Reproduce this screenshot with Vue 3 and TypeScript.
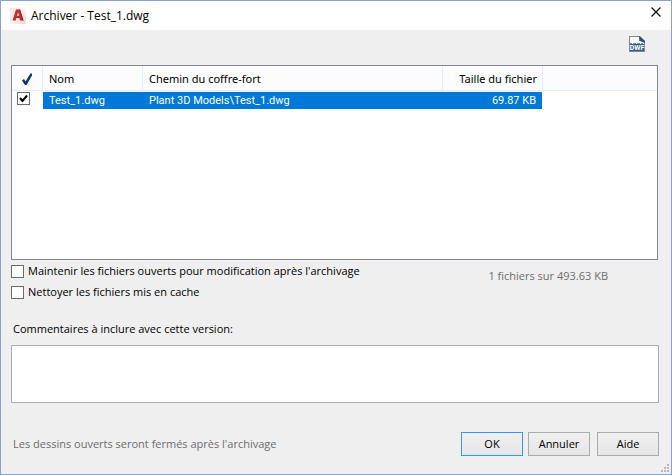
<script setup lang="ts">
import { ref } from 'vue'

interface VaultFile {
  name: string
  path: string
  size: string
  selected: boolean
}

const files = ref<VaultFile[]>([
  { name: 'Test_1.dwg', path: 'Plant 3D Models\\Test_1.dwg', size: '69.87 KB', selected: true },
])
const keepOpen = ref(false)
const clearCache = ref(false)
const comments = ref('')
</script>

<template>
  <main class="dialog">
    <header class="titlebar">
      <svg class="logo" viewBox="0 0 16 16" aria-hidden="true">
        <defs>
          <linearGradient id="logo-bg" x1="0" y1="0" x2="1" y2="1">
            <stop offset="0" stop-color="#f9e4e0" />
            <stop offset="0.5" stop-color="#fdf3f0" />
            <stop offset="1" stop-color="#f2d3cc" />
          </linearGradient>
        </defs>
        <rect width="16" height="16" fill="url(#logo-bg)" />
        <path d="M6 1.500h4l3.500 11h-3.500l-.6-2.500H6.400L5.700 12.500H2.500zM7 7.800h2L8 4.300z" fill="#c62b33" fill-rule="evenodd" />
        <path d="M9 1.500h1l3.500 11h-2z" fill="#a82630" />
      </svg>
      <h1>Archiver - Test_1.dwg</h1>
      <button class="close" type="button" aria-label="Fermer">
        <svg viewBox="0 0 10 10"><path d="M.5.5l9 9M9.500.5l-9 9" stroke="#111" stroke-width="1.3" fill="none" /></svg>
      </button>
    </header>

    <div class="toolbar">
      <button class="dwf" type="button">
        <svg viewBox="0 0 16 16">
          <path d="M0 0h11l5 5v11H0z" fill="#7d858d" />
          <path d="M1 1h9v4h5v3H1z" fill="#f7f8f9" />
          <path d="M10 0l6 5v2l-5-2z" fill="#2c4c7c" />
          <path d="M1 7.500h2M4 7.500h3M8 7.500h3M12 7.500h2" stroke="#7d858d" />
          <rect x="1" y="8" width="14" height="7" fill="#365c94" />
          <text x="8" y="14" text-anchor="middle" class="dwf-text">DWF</text>
        </svg>
      </button>
    </div>

    <section class="list">
      <table>
        <colgroup>
          <col class="c-check" /><col class="c-name" /><col class="c-path" /><col class="c-size" /><col />
        </colgroup>
        <thead>
          <tr>
            <th class="mark">
              <svg viewBox="0 0 12 13" aria-hidden="true">
                <path d="M1 7.500l2-1.500 1.500 2.500L9.500.5H11v2L5.500 12H4z" fill="#0c3563" />
              </svg>
            </th>
            <th>Nom</th>
            <th>Chemin du coffre-fort</th>
            <th class="num">Taille du fichier</th>
            <th class="rest"></th>
          </tr>
        </thead>
        <tbody>
          <tr v-for="file in files" :key="file.path">
            <td class="tick"><input v-model="file.selected" class="box" type="checkbox" :aria-label="file.name" /></td>
            <td class="sel">{{ file.name }}</td>
            <td class="sel">{{ file.path }}</td>
            <td class="sel num">{{ file.size }}</td>
            <td></td>
          </tr>
        </tbody>
      </table>
    </section>

    <section class="options">
      <div class="checks">
        <label><input v-model="keepOpen" class="box" type="checkbox" />Maintenir les fichiers ouverts pour modification après l'archivage</label>
        <label><input v-model="clearCache" class="box" type="checkbox" />Nettoyer les fichiers mis en cache</label>
      </div>
      <p class="summary">1 fichiers sur 493.63 KB</p>
    </section>

    <section class="comments">
      <label for="comments">Commentaires à inclure avec cette version:</label>
      <textarea id="comments" v-model="comments"></textarea>
    </section>

    <footer class="footer">
      <p>Les dessins ouverts seront fermés après l'archivage</p>
      <div class="buttons">
        <button class="btn primary" type="button">OK</button>
        <button class="btn" type="button">Annuler</button>
        <button class="btn help" type="button">Aide</button>
      </div>
    </footer>
    <svg class="grip" viewBox="0 0 8 8" aria-hidden="true">
      <path d="M6 0h2v2H6zM3 3h2v2H3zM6 3h2v2H6zM0 6h2v2H0zM3 6h2v2H3zM6 6h2v2H6z" fill="#bababa" />
    </svg>
  </main>
</template>

<style>
body {
  margin: 0;
}
</style>

<style scoped>
.dialog {
  position: relative;
  box-sizing: border-box;
  display: flex;
  flex-direction: column;
  min-height: 100vh;
  border: 1px solid #86a2ce;
  background: #efefef;
  color: #000;
  font-family: "Open Sans", "Noto Sans", sans-serif;
  font-size: 11px;
  line-height: 16px;
}

svg {
  display: block;
}

p,
h1 {
  margin: 0;
}

button {
  font: inherit;
  color: inherit;
  padding: 0;
}

.titlebar {
  display: flex;
  align-items: center;
  gap: 5px;
  height: 29px;
  padding: 0 10px 0 9px;
  background: #fff;
}

.logo {
  width: 16px;
  height: 16px;
}

h1 {
  flex: 1;
  font-size: 12px;
  font-weight: 400;
}

.close {
  padding-bottom: 8px;
  border: 0;
  background: none;
}

.close svg {
  width: 10px;
  height: 10px;
}

.toolbar {
  display: flex;
  justify-content: flex-end;
  height: 29px;
  padding: 6px 26px 0 0;
}

.dwf {
  width: 16px;
  height: 16px;
  border: 0;
  background: none;
}

.dwf-text {
  fill: #fff;
  font-family: Roboto, sans-serif;
  font-size: 7px;
  font-weight: 700;
}

.list {
  box-sizing: border-box;
  flex: 1;
  min-height: 195px;
  margin: 0 13px 0 10px;
  border: 1px solid #828790;
  background: #fff;
}

table {
  width: 100%;
  table-layout: fixed;
  border-collapse: separate;
  border-spacing: 0;
}

.c-check {
  width: 31px;
}

.c-name,
.c-size {
  width: 100px;
}

.c-path {
  width: 300px;
}

th {
  box-sizing: border-box;
  height: 25px;
  padding: 2px 5px 0 6px;
  border-right: 1px solid #e0eefb;
  border-bottom: 1px solid #e0eefb;
  background: #fcfcfc;
  font-family: "Noto Sans", "Open Sans", sans-serif;
  font-weight: 400;
  line-height: 16px;
  text-align: left;
  white-space: nowrap;
}

th.mark {
  padding: 2px 0 0 9px;
}

.mark svg {
  width: 12px;
  height: 13px;
}

th.rest {
  border-right: 0;
}

td {
  padding: 1px 6px 0;
  border-top: 1px solid #fff;
  font-family: Roboto, "Liberation Sans", sans-serif;
  line-height: 16px;
  white-space: nowrap;
}

td.sel {
  background: #0078d7;
  color: #fff;
}

th.num,
td.num {
  text-align: right;
}

td.num {
  border-right: 1px solid #fff;
}

td.tick {
  padding: 0 0 0 5px;
  vertical-align: top;
}

.box {
  appearance: none;
  display: block;
  flex: none;
  box-sizing: border-box;
  width: 13px;
  height: 13px;
  margin: 0;
  border: 1px solid #6b6b6b;
  background: #fff;
}

.box:checked {
  background: #fff url("data:image/svg+xml,%3Csvg xmlns='http://www.w3.org/2000/svg' viewBox='0 0 11 11'%3E%3Cpath d='M2 5l2.500 3L9 2.500' fill='none' stroke='%23000' stroke-width='2'/%3E%3C/svg%3E");
}

.options {
  display: flex;
  justify-content: space-between;
  margin: 3px 63px 0 10px;
}

.checks {
  display: flex;
  flex-direction: column;
  gap: 5px;
}

.checks label {
  display: flex;
  align-items: center;
  gap: 4px;
}

.summary {
  padding-top: 5px;
  color: #6d6d6d;
}

.comments {
  display: flex;
  flex-direction: column;
  gap: 8px;
  margin: 21px 12px 0 10px;
}

.comments label {
  padding-left: 2px;
}

textarea {
  box-sizing: border-box;
  width: 100%;
  height: 58px;
  margin: 0;
  padding: 4px;
  border: 1px solid #abadb3;
  border-radius: 0;
  background: #fff;
  font: inherit;
  resize: none;
}

.footer {
  display: flex;
  align-items: center;
  justify-content: space-between;
  margin: 29px 12px 18px;
}

.footer p {
  color: #6d6d6d;
}

.buttons {
  display: flex;
  gap: 5px;
}

.btn {
  box-sizing: border-box;
  width: 62px;
  height: 24px;
  border: 1px solid #acacac;
  background: linear-gradient(#f0f0f0, #e5e5e5);
}

.btn.primary {
  border-color: #3399ff;
}

.btn.help {
  margin-left: 2px;
}

.grip {
  position: absolute;
  right: 2px;
  bottom: 2px;
  width: 8px;
  height: 8px;
}
</style>
